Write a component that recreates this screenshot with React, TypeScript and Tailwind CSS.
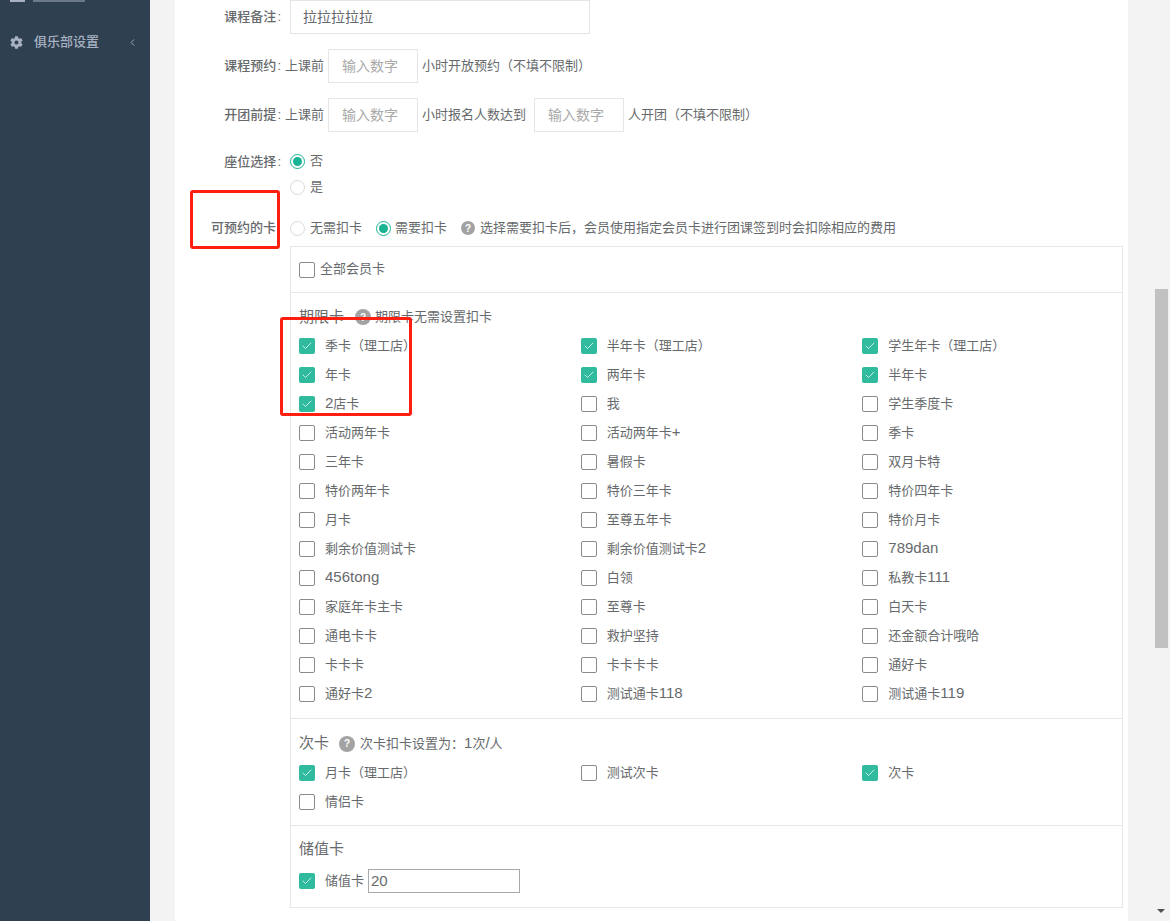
import { FaCog } from 'react-icons/fa'
import { Check, ChevronLeft } from 'lucide-react'

type Card = { name: string; on?: boolean }

const limited: Card[] = [
  { name: '季卡（理工店）', on: true }, { name: '半年卡（理工店）', on: true }, { name: '学生年卡（理工店）', on: true },
  { name: '年卡', on: true }, { name: '两年卡', on: true }, { name: '半年卡', on: true },
  { name: '2店卡', on: true }, { name: '我' }, { name: '学生季度卡' },
  { name: '活动两年卡' }, { name: '活动两年卡+' }, { name: '季卡' },
  { name: '三年卡' }, { name: '暑假卡' }, { name: '双月卡特' },
  { name: '特价两年卡' }, { name: '特价三年卡' }, { name: '特价四年卡' },
  { name: '月卡' }, { name: '至尊五年卡' }, { name: '特价月卡' },
  { name: '剩余价值测试卡' }, { name: '剩余价值测试卡2' }, { name: '789dan' },
  { name: '456tong' }, { name: '白领' }, { name: '私教卡111' },
  { name: '家庭年卡主卡' }, { name: '至尊卡' }, { name: '白天卡' },
  { name: '通电卡卡' }, { name: '救护坚持' }, { name: '还金额合计哦哈' },
  { name: '卡卡卡' }, { name: '卡卡卡卡' }, { name: '通好卡' },
  { name: '通好卡2' }, { name: '测试通卡118' }, { name: '测试通卡119' },
]

const times: Card[] = [
  { name: '月卡（理工店）', on: true }, { name: '测试次卡' }, { name: '次卡', on: true },
  { name: '情侣卡' },
]

function Box({ on }: { on?: boolean }) {
  return on ? (
    <span className="w-4 h-4 rounded-[2px] bg-[#1ab394] opacity-90 flex items-center justify-center shrink-0">
      <Check size={12} strokeWidth={1.5} className="text-white" />
    </span>
  ) : (
    <span className="w-4 h-4 rounded-[2px] border border-[#8a8a8a] bg-white shrink-0" />
  )
}

function Radio({ on }: { on?: boolean }) {
  return (
    <span className={`w-[15px] h-[15px] rounded-full border bg-white flex items-center justify-center shrink-0 ${on ? 'border-[#1ab394]' : 'border-[#d9d9d9]'}`}>
      {on && <span className="w-[9px] h-[9px] rounded-full bg-[#1ab394]" />}
    </span>
  )
}

function Hint({ big }: { big?: boolean }) {
  return (
    <span className={`rounded-full bg-[#a3a3a3] text-white text-[10px] font-bold flex items-center justify-center shrink-0 ${big ? 'w-4 h-4' : 'w-[14px] h-[14px]'}`}>?</span>
  )
}

function NumInput() {
  return (
    <span className="w-[90px] h-[34px] border border-[#e5e6e7] flex items-center pl-[13px] text-[14px] text-[#a9a9a9] bg-white">输入数字</span>
  )
}

function Label({ text }: { text: string }) {
  return (
    <div className="w-[105px] pr-[9px] text-right font-medium shrink-0">
      {text}<span className="ml-[1px]">:</span>
    </div>
  )
}

// 拉丁字符和数字比汉字大一号
function Mixed({ text }: { text: string }) {
  return (
    <span>
      {text.split(/([A-Za-z0-9+/]+)/).map((part, i) =>
        i % 2 === 1 ? <span key={i} className="text-[15px]">{part}</span> : part
      )}
    </span>
  )
}

function CardGrid({ items }: { items: Card[] }) {
  return (
    <div className="grid grid-cols-[281.67px_281.67px_1fr]">
      {items.map(c => (
        <div key={c.name} className="h-[29px] flex items-center gap-[10px] whitespace-nowrap">
          <Box on={c.on} />
          <Mixed text={c.name} />
        </div>
      ))}
    </div>
  )
}

export default function App() {
  return (
    <div
      className="relative w-[1170px] h-[921px] overflow-hidden flex bg-[#f3f3f4] text-[13px] text-[#676a6c]"
      style={{ fontFamily: '"Liberation Sans", "Noto Sans CJK SC", sans-serif' }}
    >
      {/* 侧边栏 */}
      <aside className="w-[150px] bg-[#2f4050] shrink-0 text-[#a7b1c2] font-medium">
        <div className="h-[2px] flex items-center pl-[10px] gap-[8px] overflow-hidden">
          <span className="w-[15px] h-[2px] bg-[#a7b1c2]" />
          <span className="w-[52px] h-[2px] bg-[#a7b1c2] opacity-50" />
        </div>
        <div className="mt-[30px] h-[20px] flex items-center pl-[10px] pr-[12px]">
          <FaCog size={13} />
          <span className="ml-[11px] flex-1">俱乐部设置</span>
          <ChevronLeft size={11} strokeWidth={2} />
        </div>
      </aside>

      {/* 表单 */}
      <main className="ml-[25px] w-[953px] bg-white shrink-0 pl-[10px]">
        <div className="flex items-center h-[34px]">
          <Label text="课程备注" />
          <span className="w-[300px] h-[34px] border border-[#e5e6e7] flex items-center pl-[12px] text-[14px]">拉拉拉拉拉</span>
        </div>

        <div className="flex items-center h-[34px] mt-[15px]">
          <Label text="课程预约" />
          <span className="mr-[4px] -ml-[5px]">上课前</span>
          <NumInput />
          <span className="ml-[4px]">小时开放预约（不填不限制）</span>
        </div>

        <div className="flex items-center h-[34px] mt-[15px]">
          <Label text="开团前提" />
          <span className="mr-[4px] -ml-[5px]">上课前</span>
          <NumInput />
          <span className="ml-[4px] mr-[8px]">小时报名人数达到</span>
          <NumInput />
          <span className="ml-[4px]">人开团（不填不限制）</span>
        </div>

        <div className="flex mt-[16px]">
          <div className="pt-[4px]"><Label text="座位选择" /></div>
          <div>
            <div className="h-[26px] flex items-center gap-[5px]"><Radio on /><span>否</span></div>
            <div className="h-[26px] flex items-center gap-[5px]"><Radio /><span>是</span></div>
          </div>
        </div>

        <div className="flex items-center h-[20px] mt-[18px]">
          <div className="w-[105px] pr-[14px] text-right font-medium shrink-0">可预约的卡</div>
          <Radio />
          <span className="ml-[5px]">无需扣卡</span>
          <span className="ml-[14px]"><Radio on /></span>
          <span className="ml-[4px]">需要扣卡</span>
          <span className="ml-[14px]"><Hint /></span>
          <span className="ml-[5px]">选择需要扣卡后，会员使用指定会员卡进行团课签到时会扣除相应的费用</span>
        </div>

        <div className="ml-[105px] mt-[8px] w-[833px] h-[662px] border border-[#e7e7e7]">
          <div className="h-[46px] px-[8px] flex items-center gap-[5px] border-b border-[#e7e7e7]">
            <Box />
            <span className="-mt-[2px]">全部会员卡</span>
          </div>

          <div className="h-[426px] px-[8px] border-b border-[#e7e7e7]">
            <div className="h-[38px] pt-[10px] flex items-center">
              <span className="text-[15px]">期限卡</span>
              <span className="ml-[11px]"><Hint big /></span>
              <span className="ml-[4px]">期限卡无需设置扣卡</span>
            </div>
            <CardGrid items={limited} />
          </div>

          <div className="h-[107px] px-[8px] border-b border-[#e7e7e7]">
            <div className="h-[39px] pt-[10px] flex items-center">
              <span className="text-[15px]">次卡</span>
              <span className="ml-[10px]"><Hint big /></span>
              <span className="ml-[5px]"><Mixed text="次卡扣卡设置为：1次/人" /></span>
            </div>
            <CardGrid items={times} />
          </div>

          <div className="px-[8px]">
            <div className="h-[43px] pt-[3px] flex items-center text-[15px]">储值卡</div>
            <div className="flex items-center">
              <Box on />
              <span className="ml-[10px]">储值卡</span>
              <span className="ml-[4px] w-[152px] h-[24px] border border-[#a9a9a9] flex items-center pl-[2px] text-[15px]">20</span>
            </div>
          </div>
        </div>
      </main>

      {/* 滚动条 */}
      <div className="absolute right-[2px] top-[289px] w-[13px] h-[359px] bg-[#c1c1c1]" />
      <div className="absolute right-[5px] bottom-[8px] w-0 h-0 border-x-[4px] border-x-transparent border-t-[4px] border-t-[#505050]" />

      {/* 标注框 */}
      <div className="absolute left-[190px] top-[190px] w-[90px] h-[59px] border-[3px] border-[#ff1f10] rounded-[3px]" />
      <div className="absolute left-[280px] top-[317px] w-[132px] h-[99px] border-[3px] border-[#ff1f10] rounded-[3px]" />
    </div>
  )
}
